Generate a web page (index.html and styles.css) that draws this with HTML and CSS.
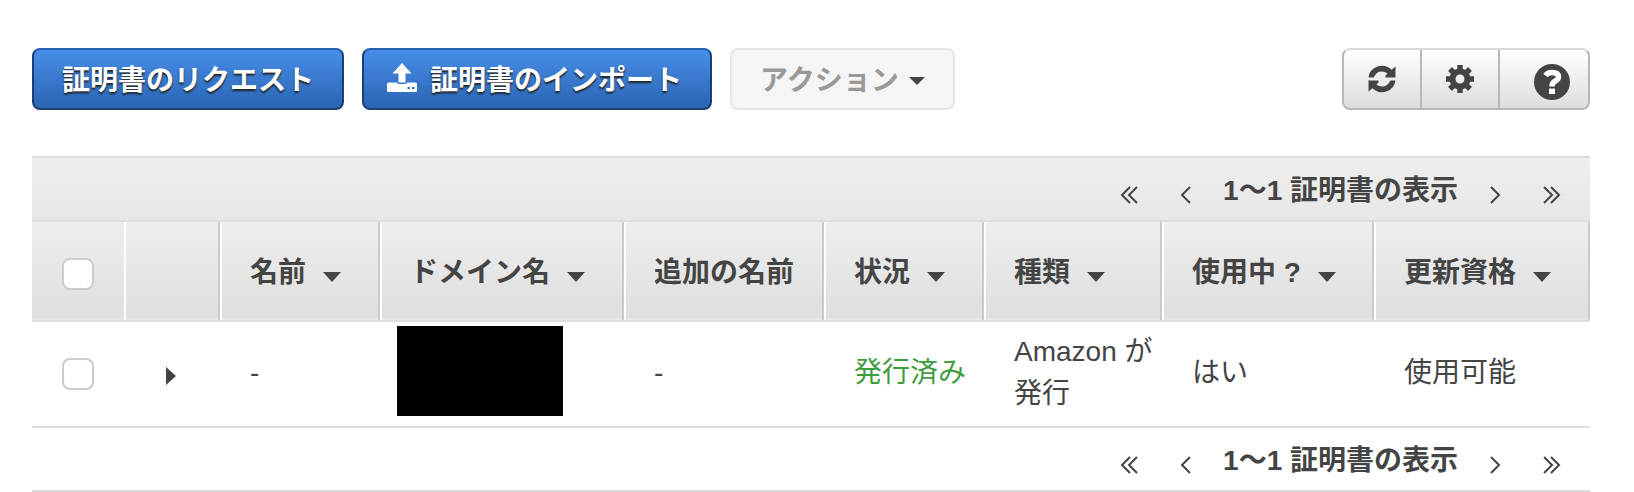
FILE: index.html
```html
<!DOCTYPE html>
<html lang="ja">
    <head>
        <meta charset="UTF-8">
        <title>証明書</title>
        <link rel="stylesheet" href="styles.css">
    </head>
    <body>
        <div class="toolbar">
            <button type="button" class="btn primary">証明書のリクエスト</button>
            <button type="button" class="btn primary import">
                <svg width="30" height="30" viewBox="0 0 30 30" fill="#fff">
                    <path d="M15 0L24.500 10.500H18.500V19.500H11.500V10.500H5.500Z"/>
                    <path fill-rule="evenodd" d="M1.500 19.500H10Q10.500 21 12 21H18Q19.500 21 20 19.500H28.500Q30 19.500 30 21V27.500Q30 29 28.500 29H1.500Q0 29 0 27.500V21Q0 19.500 1.500 19.500ZM20.500 24V26H23V24ZM25 24V26H27.500V24Z"/>
                </svg>
                証明書のインポート
            </button>
            <button type="button" class="btn actions" disabled>アクション<span class="caret small"></span></button>

            <div class="group">
                <button type="button" aria-label="更新">
                    <svg width="28" height="28" viewBox="0 0 28 28" fill="#444">
                        <path d="M0.500 12.500A13.500 13.500 0 0 1 23.500 4.800L27.500 1.500V12.500H17.500V10.500L19.500 8.500A8.500 8.500 0 0 0 5.800 12.500Z"/>
                        <path d="M27.500 15.500A13.500 13.500 0 0 1 4.500 23.200L0.500 26.500V15.500H10.500V17.500L8.500 19.500A8.500 8.500 0 0 0 22.200 15.500Z"/>
                    </svg>
                </button>
                <button type="button" aria-label="設定">
                    <svg width="28" height="28" viewBox="0 0 28 28">
                        <circle cx="14" cy="14" r="7.500" fill="none" stroke="#444" stroke-width="6"/>
                        <path d="M14 0V6M14 22V28M0 14H6M22 14H28M4 4L8.500 8.500M19.500 19.500L24 24M24 4L19.500 8.500M8.500 19.500L4 24" stroke="#444" stroke-width="5.500"/>
                    </svg>
                </button>
                <button type="button" class="help" aria-label="ヘルプ">
                    <svg width="36" height="36" viewBox="0 0 36 36">
                        <circle cx="18" cy="18" r="18" fill="#444"/>
                        <path d="M11.500 11.500Q13.500 8.500 18 8.500Q24.500 8.500 24.500 13Q24.500 15.500 21 17.200Q18 19 18 22.500" fill="none" stroke="#fff" stroke-width="5.500"/>
                        <path d="M15 24.500H21V30H15Z" fill="#fff"/>
                    </svg>
                </button>
            </div>
        </div>

        <div class="pager top">
            <button type="button" aria-label="最初"><svg width="18" height="18" viewBox="0 0 18 18"><path d="M10 1L2 9L10 17M17 1L9 9L17 17"/></svg></button>
            <button type="button" aria-label="前へ"><svg width="12" height="18" viewBox="0 0 12 18"><path d="M10 1L2 9L10 17"/></svg></button>
            <span>1〜1 証明書の表示</span>
            <button type="button" aria-label="次へ"><svg width="12" height="18" viewBox="0 0 12 18"><path d="M2 1L10 9L2 17"/></svg></button>
            <button type="button" aria-label="最後"><svg width="18" height="18" viewBox="0 0 18 18"><path d="M1 1L9 9L1 17M8 1L16 9L8 17"/></svg></button>
        </div>

        <table>
            <colgroup>
                <col class="c-check">
                <col class="c-open">
                <col class="c-name">
                <col class="c-domain">
                <col class="c-extra">
                <col class="c-status">
                <col class="c-type">
                <col class="c-used">
                <col>
            </colgroup>
            <thead>
                <tr>
                    <th class="check"><input type="checkbox" aria-label="すべて選択"></th>
                    <th class="blank"></th>
                    <th>名前<span class="caret"></span></th>
                    <th>ドメイン名<span class="caret"></span></th>
                    <th>追加の名前</th>
                    <th>状況<span class="caret"></span></th>
                    <th>種類<span class="caret"></span></th>
                    <th>使用中 ?<span class="caret"></span></th>
                    <th>更新資格<span class="caret"></span></th>
                </tr>
            </thead>
            <tbody>
                <tr>
                    <td class="check"><input type="checkbox" aria-label="選択"></td>
                    <td class="open"><button type="button" aria-label="詳細"></button></td>
                    <td>-</td>
                    <td class="domain"><div class="mask"></div></td>
                    <td>-</td>
                    <td class="issued">発行済み</td>
                    <td>Amazon が発行</td>
                    <td>はい</td>
                    <td>使用可能</td>
                </tr>
            </tbody>
        </table>

        <div class="pager">
            <button type="button" aria-label="最初"><svg width="18" height="18" viewBox="0 0 18 18"><path d="M10 1L2 9L10 17M17 1L9 9L17 17"/></svg></button>
            <button type="button" aria-label="前へ"><svg width="12" height="18" viewBox="0 0 12 18"><path d="M10 1L2 9L10 17"/></svg></button>
            <span>1〜1 証明書の表示</span>
            <button type="button" aria-label="次へ"><svg width="12" height="18" viewBox="0 0 12 18"><path d="M2 1L10 9L2 17"/></svg></button>
            <button type="button" aria-label="最後"><svg width="18" height="18" viewBox="0 0 18 18"><path d="M1 1L9 9L1 17M8 1L16 9L8 17"/></svg></button>
        </div>
    </body>
</html>
```
FILE: styles.css
```css
* {
    box-sizing: border-box;
}
body {
    margin: 0;
    padding: 48px 44px 0 32px;
    background-color: #fff;
    color: #444;
    font-family: "Liberation Sans", "Noto Sans CJK JP", sans-serif;
    font-size: 28px;
    line-height: 42px;
}
button {
    margin: 0;
    padding: 0;
    border: 0;
    background: none;
    color: inherit;
    font: inherit;
}
svg {
    display: block;
}

/* buttons */
.toolbar {
    display: flex;
    gap: 18px;
    margin-bottom: 46px;
}
.btn {
    display: flex;
    align-items: center;
    height: 62px;
    padding: 4px 28px 0;
    border: 2px solid;
    border-radius: 8px;
    font-weight: bold;
    white-space: nowrap;
}
.primary {
    border-color: #2a62b2 #1a4075 #1a4075;
    background: linear-gradient(#478ee8, #2b64b3);
    color: #fff;
    text-shadow: 0 2px 2px #222;
}
.import {
    gap: 13px;
    padding-left: 23px;
}
.import svg {
    align-self: flex-start;
    margin-top: 9px;
}
.actions {
    gap: 10px;
    border-color: #e6e6e6;
    background-color: #f5f5f5;
    color: #999;
}
.group {
    display: flex;
    height: 62px;
    margin-left: auto;
    border: 2px solid #b7b7b7;
    border-top-color: #d9d9d9;
    border-radius: 8px;
    background: linear-gradient(#fff, #ddd);
}
.group button {
    display: flex;
    align-items: center;
    justify-content: center;
    width: 78px;
    border-right: 2px solid #b7b7b7;
}
.group .help {
    width: 88px;
    padding: 6px 0 0 16px;
    border-right: 0;
}

.caret {
    display: inline-block;
    margin-left: 17px;
    border: 9px solid transparent;
    border-top: 10px solid #444;
    border-bottom: 0;
}
.small {
    margin-left: 0;
    border-width: 8px 8px 0;
}

/* paging bars */
.pager {
    display: flex;
    align-items: center;
    justify-content: flex-end;
    height: 64px;
    padding-right: 29px;
    border-bottom: 2px solid #ddd;
    font-weight: bold;
}
.top {
    height: 66px;
    border-top: 2px solid #ddd;
    background: linear-gradient(#eee, #e7e7e7);
}
.pager span {
    margin: 0 31px;
    padding-top: 4px;
}
.pager button {
    padding-top: 12px;
}
.pager button:first-child {
    margin-right: 42px;
}
.pager button:last-child {
    margin-left: 42px;
}
.pager path {
    fill: none;
    stroke: #444;
    stroke-width: 2;
}

/* certificates */
table {
    width: 100%;
    table-layout: fixed;
    border-spacing: 0;
}
.c-check { width: 92px; }
.c-open { width: 96px; }
.c-name { width: 160px; }
.c-domain { width: 244px; }
.c-extra { width: 200px; }
.c-status { width: 160px; }
.c-type { width: 178px; }
.c-used { width: 212px; }
th, td {
    padding: 0 0 2px 30px;
    border-bottom: 2px solid #ddd;
    text-align: left;
    vertical-align: middle;
}
th {
    height: 100px;
    padding: 4px 0 0 30px;
    background: linear-gradient(#eee, #dedede);
    box-shadow: inset 2px 0 #fff, inset -2px 0 #c9c9c9, inset 0 -2px #e6e6e6;
    white-space: nowrap;
}
td {
    height: 106px;
}
th.check {
    box-shadow: inset 0 -2px #e6e6e6;
}
.blank {
    box-shadow: inset 2px 0 #fff, inset -2px 0 #c9c9c9, inset 0 -2px #e6e6e6;
}
.check {
    padding: 6px 0 0 30px;
}
.check input {
    display: block;
    appearance: none;
    width: 32px;
    height: 32px;
    margin: 0;
    border: 2px solid #ccc;
    border-radius: 8px;
    background-color: #fff;
}
td.check {
    padding-top: 0;
}
.open {
    padding: 4px 0 0 42px;
}
.open button {
    display: block;
    border: 9px solid transparent;
    border-left: 10px solid #444;
    border-right: 0;
}
.domain {
    padding: 4px 0 10px 17px;
}
.mask {
    width: 166px;
    height: 90px;
    background-color: #000;
}
.issued {
    color: #3f9c3f;
}
```
